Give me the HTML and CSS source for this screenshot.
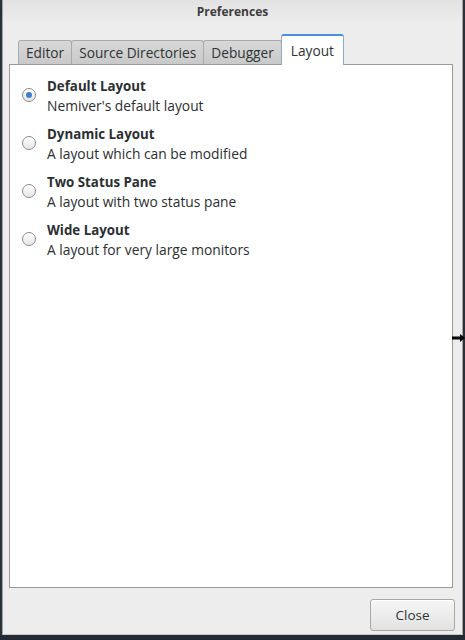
FILE: index.html
```html
<!DOCTYPE html>
<html>
<head>
<meta charset="utf-8">
<link rel="stylesheet" href="styles.css">
</head>
<body>
<div class="window">
  <div class="titlebar">Preferences</div>
  <div class="tabs">
    <div class="tab">Editor</div>
    <div class="tab">Source Directories</div>
    <div class="tab">Debugger</div>
    <div class="tab active">Layout</div>
  </div>
  <div class="panel">
    <div class="option">
      <span class="radio checked"></span>
      <div class="texts"><div class="name">Default Layout</div><div class="desc">Nemiver's default layout</div></div>
    </div>
    <div class="option">
      <span class="radio"></span>
      <div class="texts"><div class="name">Dynamic Layout</div><div class="desc">A layout which can be modified</div></div>
    </div>
    <div class="option">
      <span class="radio"></span>
      <div class="texts"><div class="name">Two Status Pane</div><div class="desc">A layout with two status pane</div></div>
    </div>
    <div class="option">
      <span class="radio"></span>
      <div class="texts"><div class="name">Wide Layout</div><div class="desc">A layout for very large monitors</div></div>
    </div>
  </div>
  <div class="footer">
    <button class="btn">Close</button>
  </div>
  <svg class="cursor" width="14" height="10" viewBox="0 0 14 10"><path d="M0 3.5h8V1l5 4-5 4V6.5H0z" fill="#000"/></svg>
</div>
<div class="taskbar"></div>
</body>
</html>
```
FILE: styles.css
```css
html, body { margin: 0; padding: 0; background: #2b3138; }
body { width: 465px; height: 640px; overflow: hidden; font-family: "Open Sans", "Noto Sans", sans-serif; color: #2e3436; }
.window {
  position: relative;
  margin-left: 2px;
  width: 459px;
  height: 634px;
  border-left: 1px solid #a4a4a4;
  border-right: 1px solid #a4a4a4;
  border-bottom: 1px solid #c8c8c8;
  background: #ededed;
  display: flex;
  flex-direction: column;
}
.titlebar {
  height: 24px;
  line-height: 24px;
  text-align: center;
  font-size: 12px;
  font-weight: bold;
  color: #3d3d3d;
  background: linear-gradient(#e2e2e2, #ededed);
}
.tabs {
  display: flex;
  align-items: flex-end;
  padding-left: 15px;
  height: 40px;
  position: relative;
  z-index: 1;
}
.tab {
  height: 24px;
  line-height: 23px;
  padding: 0 7px;
  font-size: 13.7px;
  color: #2e3436;
  background: linear-gradient(#d8d8d8, #c9c9c9);
  border: 1px solid #a9a9a9;
  border-bottom: none;
  border-radius: 3px 3px 0 0;
  margin-right: -1px;
  box-sizing: border-box;
}
.tab.active {
  height: 31px;
  line-height: 30px;
  padding: 0 9px;
  background: #ffffff;
  border-top: 2px solid #4a90d9;
  border-color: #8aa9cc;
  border-top-color: #4a90d9;
  margin-bottom: -1px;
}
.panel {
  margin-left: 6px;
  width: 444px;
  height: 524px;
  background: #ffffff;
  border: 1px solid #9a9a9a;
  box-sizing: border-box;
  padding-top: 7px;
}
.option {
  display: flex;
  align-items: center;
  height: 48px;
  padding-left: 12px;
}
.radio {
  width: 14px;
  height: 14px;
  border-radius: 50%;
  border: 1px solid #8c8c8c;
  background: linear-gradient(#ffffff, #e6e6e6);
  box-sizing: border-box;
  margin-right: 11px;
  flex: none;
  position: relative;
  margin-top: -3px;
}
.radio.checked::after {
  content: "";
  position: absolute;
  left: 3px;
  top: 3px;
  width: 6px;
  height: 6px;
  border-radius: 50%;
  background: #3f7fcf;
}
.name { font-size: 13.3px; font-weight: bold; line-height: 20px; color: #2b2f31; }
.desc { font-size: 13.8px; line-height: 20px; color: #2b2f31; }
.footer {
  flex: 1;
  display: flex;
  justify-content: flex-end;
  align-items: flex-start;
  padding: 11px 7px 0 0;
}
.btn {
  width: 85px;
  height: 32px;
  font-family: inherit;
  font-size: 13.5px;
  color: #2e3436;
  background: linear-gradient(#f6f6f6, #e2e2e2);
  border: 1px solid #a8a8a8;
  border-radius: 3px;
  box-shadow: inset 0 1px #ffffff;
}
.cursor {
  position: absolute;
  left: 449px;
  top: 333px;
}
.taskbar { height: 5px; background: #232a33; }
```
